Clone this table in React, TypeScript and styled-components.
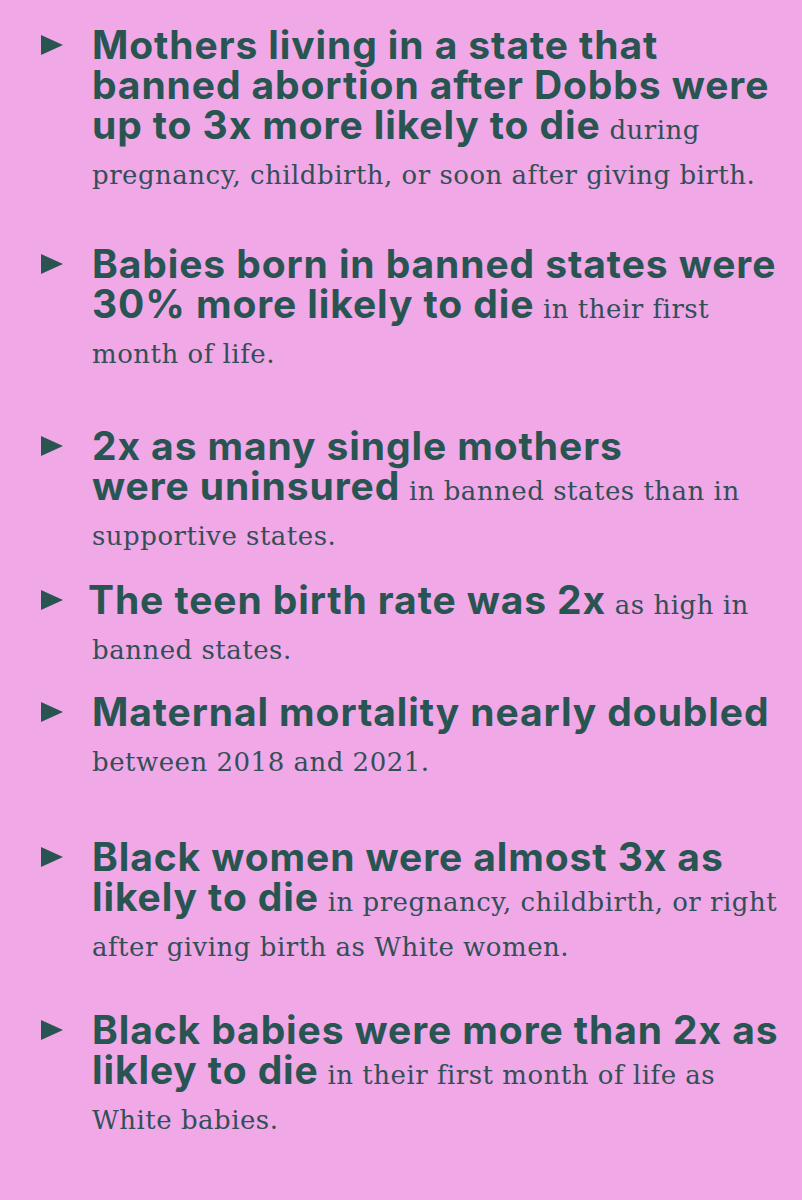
import React from "react";
import styled, { createGlobalStyle } from "styled-components";

const GlobalStyle = createGlobalStyle`
  html, body {
    margin: 0;
    padding: 0;
    background: #f1a8e7;
  }
`;

const Page = styled.div`
  width: 802px;
  min-height: 1200px;
  background: #f1a8e7;
  padding: 25px 0 40px 41px;
  box-sizing: border-box;
  color: #285551;
`;

const Item = styled.div<{ $space: number }>`
  display: flex;
  align-items: flex-start;
  margin-top: ${(p) => p.$space}px;
`;

const Marker = styled.div`
  flex: 0 0 22px;
  height: 40px;
  display: flex;
  align-items: center;
  margin-right: 29px;
`;

const Text = styled.p<{ $indent?: number }>`
  margin: 0;
  font-family: Inter, "Liberation Sans", sans-serif;
  font-size: 39px;
  line-height: 40px;
  white-space: nowrap;
  text-indent: ${(p) => p.$indent || 0}px;
`;

const Strong = styled.span`
  font-family: Inter, "Liberation Sans", sans-serif;
  font-weight: 700;
  font-size: 39px;
  letter-spacing: 0.9px;
`;

const Plain = styled.span<{ $tail?: boolean }>`
  font-family: "DejaVu Serif", "Liberation Serif", serif;
  font-weight: 400;
  font-size: 26px;
  line-height: 20px;
  letter-spacing: 0.5px;
  color: #314f57;
  vertical-align: ${(p) => (p.$tail ? "-5px" : "baseline")};
`;

const Arrow = () => (
  <svg width="22" height="20" viewBox="0 0 22 20">
    <polygon points="0,0 22,10 0,20" fill="#285551" />
  </svg>
);

type Fact = {
  space: number;
  indent?: number;
  lines: [string, string][];
};

const facts: Fact[] = [
  {
    space: 0,
    lines: [
      ["Mothers living in a state that", ""],
      ["banned abortion after Dobbs were", ""],
      ["up to 3x more likely to die", " during"],
      ["", "pregnancy, childbirth, or soon after giving birth."],
    ],
  },
  {
    space: 59,
    lines: [
      ["Babies born in banned states were", ""],
      ["30% more likely to die", " in their first"],
      ["", "month of life."],
    ],
  },
  {
    space: 62,
    lines: [
      ["2x as many single mothers", ""],
      ["were uninsured", " in banned states than in"],
      ["", "supportive states."],
    ],
  },
  {
    space: 34,
    indent: -4,
    lines: [
      ["The teen birth rate was 2x", " as high in"],
      ["", "banned states."],
    ],
  },
  {
    space: 32,
    lines: [
      ["Maternal mortality nearly doubled", ""],
      ["", "between 2018 and 2021."],
    ],
  },
  {
    space: 65,
    lines: [
      ["Black women were almost 3x as", ""],
      ["likely to die", " in pregnancy, childbirth, or right"],
      ["", "after giving birth as White women."],
    ],
  },
  {
    space: 53,
    lines: [
      ["Black babies were more than 2x as", ""],
      ["likley to die", " in their first month of life as"],
      ["", "White babies."],
    ],
  },
];

export default function App() {
  return (
    <>
      <GlobalStyle />
      <Page>
        {facts.map((f, i) => (
          <Item key={i} $space={f.space}>
            <Marker>
              <Arrow />
            </Marker>
            <Text $indent={f.indent}>
              {f.lines.map(([bold, rest], j) => (
                <React.Fragment key={j}>
                  {j > 0 && <br />}
                  {bold && <Strong>{bold}</Strong>}
                  {rest && <Plain $tail={!bold}>{rest}</Plain>}
                </React.Fragment>
              ))}
            </Text>
          </Item>
        ))}
      </Page>
    </>
  );
}
